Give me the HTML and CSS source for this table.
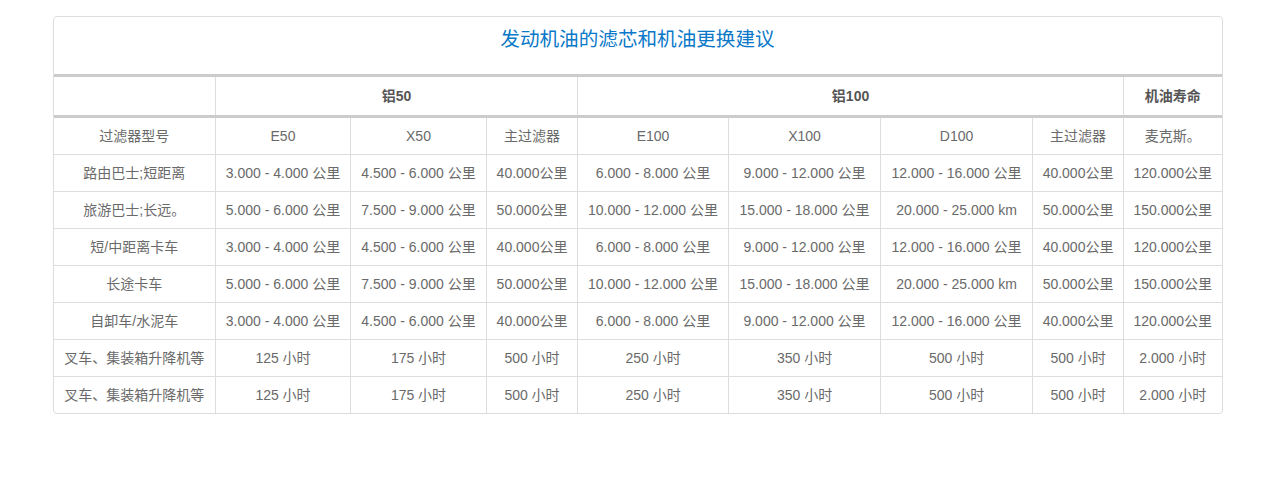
FILE: index.html
```html
<!DOCTYPE html>
<html lang="zh">
<head>
<meta charset="utf-8">
<link rel="stylesheet" href="styles.css">
</head>
<body>
<div class="panel">
  <div class="title">发动机油的滤芯和机油更换建议</div>
  <table class="grid">
    <colgroup>
      <col class="c1"><col class="c2"><col class="c3"><col class="c4"><col class="c5"><col class="c6"><col class="c7"><col class="c8"><col class="c9">
    </colgroup>
    <thead>
      <tr>
        <th></th>
        <th colspan="3">铝50</th>
        <th colspan="4">铝100</th>
        <th>机油寿命</th>
      </tr>
    </thead>
    <tbody>
      <tr><td>过滤器型号</td><td>E50</td><td>X50</td><td>主过滤器</td><td>E100</td><td>X100</td><td>D100</td><td>主过滤器</td><td>麦克斯。</td></tr>
      <tr><td>路由巴士;短距离</td><td>3.000 - 4.000 公里</td><td>4.500 - 6.000 公里</td><td>40.000公里</td><td>6.000 - 8.000 公里</td><td>9.000 - 12.000 公里</td><td>12.000 - 16.000 公里</td><td>40.000公里</td><td>120.000公里</td></tr>
      <tr><td>旅游巴士;长远。</td><td>5.000 - 6.000 公里</td><td>7.500 - 9.000 公里</td><td>50.000公里</td><td>10.000 - 12.000 公里</td><td>15.000 - 18.000 公里</td><td>20.000 - 25.000 km</td><td>50.000公里</td><td>150.000公里</td></tr>
      <tr><td>短/中距离卡车</td><td>3.000 - 4.000 公里</td><td>4.500 - 6.000 公里</td><td>40.000公里</td><td>6.000 - 8.000 公里</td><td>9.000 - 12.000 公里</td><td>12.000 - 16.000 公里</td><td>40.000公里</td><td>120.000公里</td></tr>
      <tr><td>长途卡车</td><td>5.000 - 6.000 公里</td><td>7.500 - 9.000 公里</td><td>50.000公里</td><td>10.000 - 12.000 公里</td><td>15.000 - 18.000 公里</td><td>20.000 - 25.000 km</td><td>50.000公里</td><td>150.000公里</td></tr>
      <tr><td>自卸车/水泥车</td><td>3.000 - 4.000 公里</td><td>4.500 - 6.000 公里</td><td>40.000公里</td><td>6.000 - 8.000 公里</td><td>9.000 - 12.000 公里</td><td>12.000 - 16.000 公里</td><td>40.000公里</td><td>120.000公里</td></tr>
      <tr><td>叉车、集装箱升降机等</td><td>125 小时</td><td>175 小时</td><td>500 小时</td><td>250 小时</td><td>350 小时</td><td>500 小时</td><td>500 小时</td><td>2.000 小时</td></tr>
      <tr><td>叉车、集装箱升降机等</td><td>125 小时</td><td>175 小时</td><td>500 小时</td><td>250 小时</td><td>350 小时</td><td>500 小时</td><td>500 小时</td><td>2.000 小时</td></tr>
    </tbody>
  </table>
</div>
</body>
</html>
```

FILE: styles.css
```css
html, body {
  margin: 0;
  padding: 0;
  background: #fff;
}

body {
  font-family: "Liberation Sans", "Noto Sans CJK SC", sans-serif;
  font-size: 14px;
  color: #6a6a6a;
}

.panel {
  width: 1168px;
  margin: 16px auto 0;
  border: 1px solid #ddd;
  border-radius: 4px;
  overflow: hidden;
}

.title {
  height: 60px;
  box-sizing: border-box;
  padding-top: 7px;
  line-height: 28px;
  text-align: center;
  font-family: "Noto Sans CJK SC", sans-serif;
  font-size: 19.6px;
  color: #0a78c8;
  border-bottom: 3px solid #cccccc;
}

.grid {
  width: 1168px;
  border-collapse: collapse;
  table-layout: fixed;
}

.c1 { width: 162px; }
.c2 { width: 135px; }
.c3 { width: 136px; }
.c4 { width: 91px; }
.c5 { width: 151px; }
.c6 { width: 152px; }
.c7 { width: 152px; }
.c8 { width: 91px; }
.c9 { width: 98px; }

.grid th,
.grid td {
  padding: 8px 0;
  line-height: 20px;
  height: 20px;
  text-align: center;
  border: 1px solid #dddddd;
  white-space: nowrap;
}

.grid th {
  height: 22px;
  font-weight: bold;
  color: #555;
  border-top: none;
  border-bottom: 3px solid #cccccc;
}

.grid tr > :first-child { border-left: none; }
.grid tr > :last-child { border-right: none; }
.grid tbody tr:last-child td { border-bottom: none; }
```
